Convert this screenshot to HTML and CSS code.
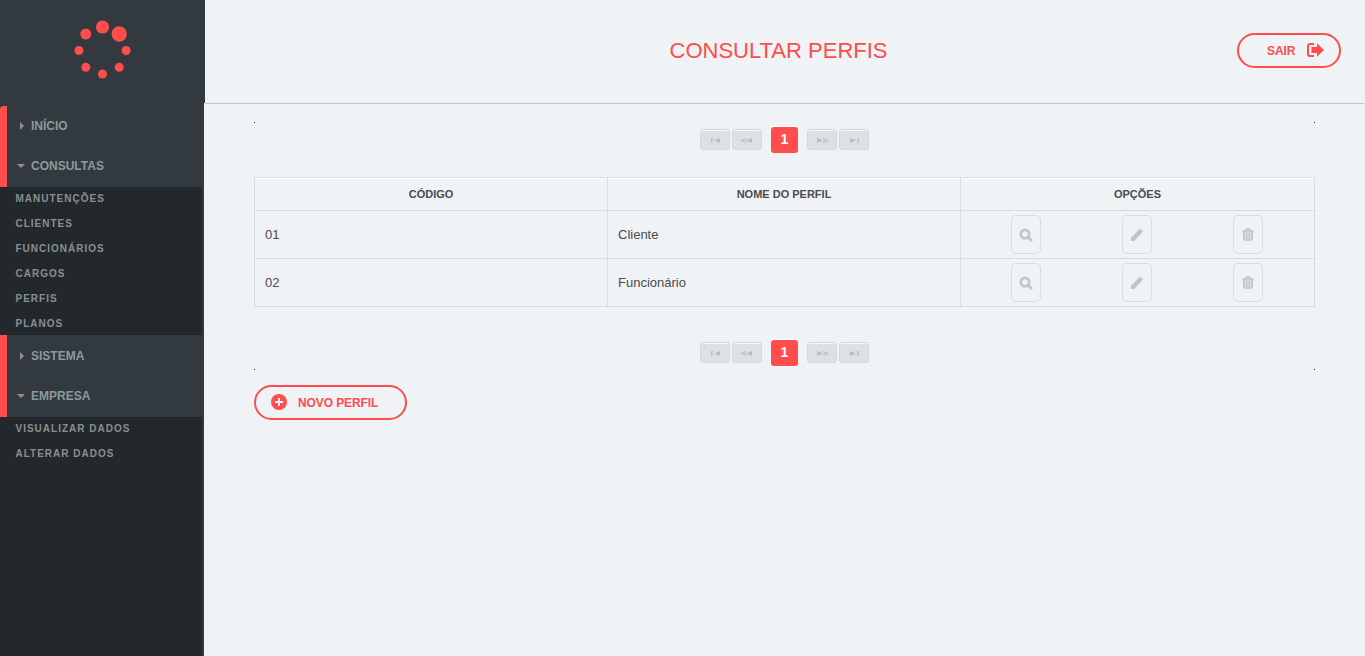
FILE: index.html
```html
<!DOCTYPE html>
<html lang="pt-BR">
<head>
<meta charset="utf-8">
<title>Consultar Perfis</title>
<link rel="stylesheet" href="styles.css">
</head>
<body>
<svg class="defs" aria-hidden="true">
  <symbol id="search" viewBox="0 0 14 14"><circle cx="6" cy="6" r="4.200" fill="none" stroke="currentColor" stroke-width="2.700"/><path d="M9 9.200l3.200 3" stroke="currentColor" stroke-width="2.800" stroke-linecap="round"/></symbol>
  <symbol id="pencil" viewBox="0 0 14 14"><path d="M1 13v-3.300L9.500 1.200q.8-.7 1.500 0l1.600 1.500q.7.700 0 1.400L4.200 13z" fill="currentColor"/></symbol>
  <symbol id="trash" viewBox="0 0 14 14"><path d="M3 4h8v8H3z" fill="currentColor" opacity=".55"/><path d="M1.300 3h11.400M4.800 2.500L5.300 1h3.400l.5 1.500M2.800 3.500V11q0 1 1 1h6.400q1 0 1-1V3.500" fill="none" stroke="currentColor" stroke-width="1.500"/><path d="M5.500 5v5.500M7 5v5.500M8.500 5v5.500" stroke="currentColor" stroke-width=".8"/></symbol>
</svg>
<div class="app">
  <aside class="sidebar">
    <div class="logo">
      <svg width="58" height="60" viewBox="0 0 58 60" fill="#ff4c4c">
        <circle cx="28.500" cy="8" r="6.600"/><circle cx="45.200" cy="15" r="7.700"/><circle cx="11.800" cy="15" r="5.500"/>
        <circle cx="4.900" cy="31.500" r="4.500"/><circle cx="52.100" cy="31.500" r="4.500"/><circle cx="11.800" cy="48.300" r="4.500"/>
        <circle cx="45.200" cy="48.300" r="4.500"/><circle cx="28.500" cy="55" r="4.500"/>
      </svg>
    </div>
    <nav class="menu">
      <div class="group group-first">
        <a class="item"><i class="arrow right"></i>INÍCIO</a>
        <a class="item"><i class="arrow down"></i>CONSULTAS</a>
      </div>
      <div class="submenu submenu-main">
        <a>MANUTENÇÕES</a><a>CLIENTES</a><a>FUNCIONÁRIOS</a><a>CARGOS</a><a>PERFIS</a><a>PLANOS</a>
      </div>
      <div class="group">
        <a class="item"><i class="arrow right"></i>SISTEMA</a>
        <a class="item"><i class="arrow down"></i>EMPRESA</a>
      </div>
      <div class="submenu"><a>VISUALIZAR DADOS</a><a>ALTERAR DADOS</a></div>
    </nav>
  </aside>
  <div class="page">
    <header class="header">
      <h1>CONSULTAR PERFIS</h1>
      <a class="pill logout">SAIR
        <svg width="17" height="14" viewBox="0 0 17 14"><path d="M7 1H3Q1 1 1 3v8q0 2 2 2h4" fill="none" stroke="currentColor" stroke-width="2"/><path d="M4.500 4H10V.3L17 7l-7 6.700V10H4.500z" fill="currentColor"/></svg>
      </a>
    </header>
    <main class="content">
      <div class="pager pager-top">
        <span class="page-btn"><svg width="30" height="21"><path d="M11 9h1.500v5H11zM20 9v5l-6-2.500z"/></svg></span>
        <span class="page-btn"><svg width="30" height="21"><path d="M14.500 9.500L10 11.500l4.500 2" class="chevron"/><path d="M20 9v5l-6-2.500z"/></svg></span>
        <span class="page-btn current">1</span>
        <span class="page-btn"><svg width="30" height="21"><path d="M10 9v5l6-2.500z"/><path d="M16 9.500l4.500 2-4.500 2" class="chevron"/></svg></span>
        <span class="page-btn"><svg width="30" height="21"><path d="M11 9v5l6-2.500zM18.500 9H20v5h-1.500z"/></svg></span>
      </div>
      <table class="grid">
        <colgroup><col class="col-code"><col class="col-name"><col></colgroup>
        <thead><tr><th>CÓDIGO</th><th>NOME DO PERFIL</th><th>OPÇÕES</th></tr></thead>
        <tbody>
          <tr><td>01</td><td>Cliente</td><td class="options"><div class="actions"><span><b><svg><use href="#search"/></svg></b></span><span><b><svg><use href="#pencil"/></svg></b></span><span><b><svg><use href="#trash"/></svg></b></span></div></td></tr>
          <tr><td>02</td><td>Funcionário</td><td class="options"><div class="actions"><span><b><svg><use href="#search"/></svg></b></span><span><b><svg><use href="#pencil"/></svg></b></span><span><b><svg><use href="#trash"/></svg></b></span></div></td></tr>
        </tbody>
      </table>
      <div class="pager pager-bottom">
        <span class="page-btn"><svg width="30" height="21"><path d="M11 9h1.500v5H11zM20 9v5l-6-2.500z"/></svg></span>
        <span class="page-btn"><svg width="30" height="21"><path d="M14.500 9.500L10 11.500l4.500 2" class="chevron"/><path d="M20 9v5l-6-2.500z"/></svg></span>
        <span class="page-btn current">1</span>
        <span class="page-btn"><svg width="30" height="21"><path d="M10 9v5l6-2.500z"/><path d="M16 9.500l4.500 2-4.500 2" class="chevron"/></svg></span>
        <span class="page-btn"><svg width="30" height="21"><path d="M11 9v5l6-2.500zM18.500 9H20v5h-1.500z"/></svg></span>
      </div>
      <a class="pill create">
        <svg width="16" height="16" viewBox="0 0 16 16"><circle cx="8" cy="8" r="8" fill="currentColor"/><path d="M8 4v8M4 8h8" stroke="#eff3f6" stroke-width="2"/></svg>
        NOVO PERFIL
      </a>
    </main>
  </div>
</div>
</body>
</html>
```
FILE: styles.css
```css
* { box-sizing: border-box; }
body { margin: 0; background: #eff3f6; font-family: "Liberation Sans", Arial, sans-serif; overflow: hidden; }
.defs { display: none; }
.app { display: flex; height: 656px; }

/* Sidebar */
.sidebar { width: 204px; flex: none; background: #22282b; border-right: 2px solid #32393f; }
.logo { width: 205px; height: 103px; padding: 19px 0 0 74px; background: #32393f; }
.logo svg { display: block; }
.menu { width: 202px; }
.menu::before { content: ""; display: block; height: 3px; background: #32393f; }
.group { height: 82px; padding-top: 1px; background: #32393f; border-left: 7px solid #ff4c4c; }
.group-first { height: 81px; padding-top: 0; border-top-left-radius: 3px; }
.item { display: flex; align-items: center; height: 40px; padding-left: 10px; color: #8c9a9c; font-size: 12px; font-weight: bold; }
.arrow { flex: none; border: solid transparent; margin-right: 6px; }
.arrow.right { width: 4px; height: 8px; margin-left: 3px; margin-right: 7px; border-width: 4px 0 4px 4px; border-left-color: #948e92; }
.arrow.down { width: 8px; height: 4px; border-width: 4px 4px 0; border-top-color: #948e92; }
.submenu a { display: block; height: 25px; padding-left: 15.500px; line-height: 23px; color: #8a8f91; font-size: 10px; font-weight: bold; letter-spacing: 1px; }
.submenu-main { height: 148px; overflow: hidden; }

/* Header */
.page { flex: 1; min-width: 0; }
.header { display: grid; grid-template-columns: 1fr auto 1fr; align-items: center; height: 104px; margin: 0 1px; padding: 0 24px 3px 0; border-bottom: 1px solid #c0c5c9; }
.header h1 { grid-column: 2; margin: 0 -6px 0 6px; padding-top: 1px; color: #ff4c4c; font-size: 22px; line-height: 26px; font-weight: normal; }
.pill { display: flex; align-items: center; height: 35px; border: 2px solid #ff4c4c; border-radius: 18px; color: #ff4c4c; font-size: 12px; font-weight: bold; letter-spacing: -0.1px; }
.logout { justify-self: end; width: 104px; padding: 1px 0 0 28px; gap: 12px; margin-right: -1px; }
.logout svg { margin-top: -1px; }

/* Pagination */
.content { margin: 18px 50px 0; }
.pager { display: flex; align-items: flex-start; justify-content: center; gap: 2px; }
.pager::before, .pager::after { content: ""; width: 1px; height: 1px; background: #222; }
.pager::before { margin: -7px auto 0 0; }
.pager::after { margin: -7px 0 0 auto; }
.pager-top { height: 55px; padding-top: 7px; }
.pager-bottom { height: 78px; padding-top: 35px; }
.pager-bottom::before, .pager-bottom::after { margin-top: 27px; }
.page-btn { display: block; width: 30px; height: 21px; background: #dde1e4; border: 1px solid #d3d8da; border-radius: 3px; box-shadow: inset 0 1px 0 #f6f8fa; }
.page-btn svg { display: block; margin: -1px; fill: #b0c0ca; }
.page-btn .chevron { fill: none; stroke: #b0c0ca; stroke-width: 1.3; }
.page-btn.current { width: 27px; height: 26px; margin: -2px 7px 0; border: 0; box-shadow: 0 -1px 0 #fff; background: #ff4c4c; color: #fff; font-size: 14px; line-height: 25px; font-weight: bold; text-align: center; }

/* Profile table */
.grid { width: 1061px; table-layout: fixed; border-collapse: collapse; color: #4a4b4e; font-size: 13px; }
.col-code, .col-name { width: 353px; }
.grid th, .grid td { border: 1px solid #d9dcde; }
.grid th { height: 33px; padding: 0; font-size: 11px; box-shadow: inset 0 1px 0 #fff; }
.grid td { height: 48px; padding: 0 10px; }
.grid .options { padding: 0 12px 0 9px; }
.actions { display: grid; grid-template-columns: repeat(3, 111px); }
.actions span { display: flex; justify-content: center; }
.actions b { display: grid; place-items: center; width: 30px; height: 39px; border: 1px solid #d9dee1; border-radius: 5px; color: #c3c4c5; }
.actions svg { width: 14px; height: 14px; }
.create { width: 153px; padding-left: 15px; gap: 11.5px; }
.create svg { margin: -2px 0 0 -0.5px; }
```
